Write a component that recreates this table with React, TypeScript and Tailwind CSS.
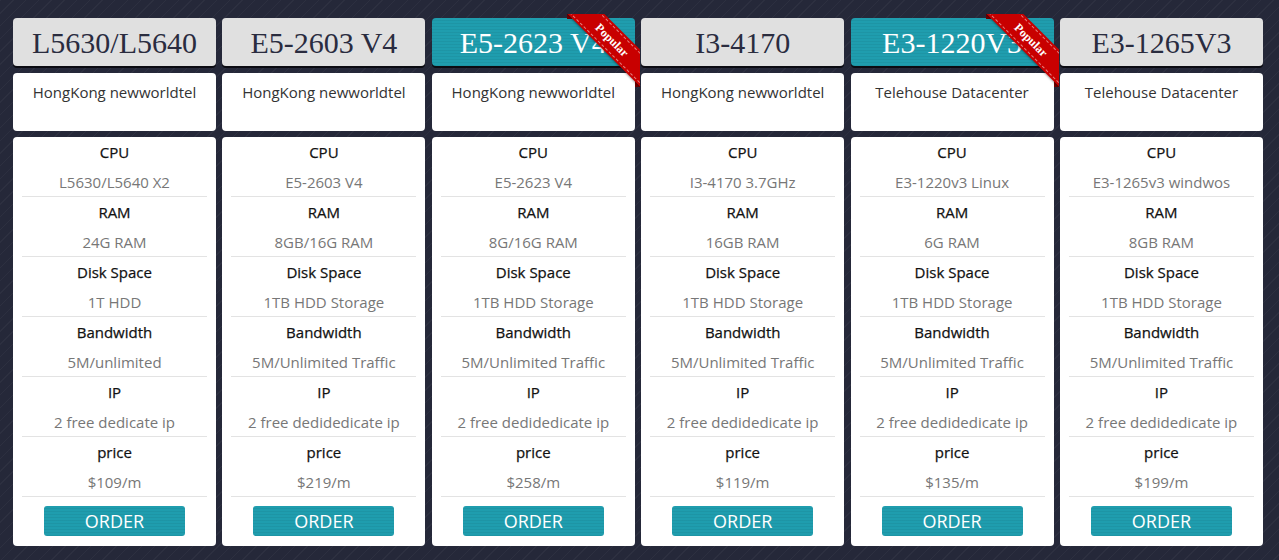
import React from "react";

type Plan = {
  title: string;
  popular?: boolean;
  location: string;
  cpu: string;
  ram: string;
  disk: string;
  bw: string;
  ip: string;
  price: string;
};

const plans: Plan[] = [
  { title: "L5630/L5640", location: "HongKong newworldtel", cpu: "L5630/L5640 X2", ram: "24G RAM", disk: "1T HDD", bw: "5M/unlimited", ip: "2 free dedicate ip", price: "$109/m" },
  { title: "E5-2603 V4", location: "HongKong newworldtel", cpu: "E5-2603 V4", ram: "8GB/16G RAM", disk: "1TB HDD Storage", bw: "5M/Unlimited Traffic", ip: "2 free dedidedicate ip", price: "$219/m" },
  { title: "E5-2623 V4", popular: true, location: "HongKong newworldtel", cpu: "E5-2623 V4", ram: "8G/16G RAM", disk: "1TB HDD Storage", bw: "5M/Unlimited Traffic", ip: "2 free dedidedicate ip", price: "$258/m" },
  { title: "I3-4170", location: "HongKong newworldtel", cpu: "I3-4170 3.7GHz", ram: "16GB RAM", disk: "1TB HDD Storage", bw: "5M/Unlimited Traffic", ip: "2 free dedidedicate ip", price: "$119/m" },
  { title: "E3-1220V3", popular: true, location: "Telehouse Datacenter", cpu: "E3-1220v3 Linux", ram: "6G RAM", disk: "1TB HDD Storage", bw: "5M/Unlimited Traffic", ip: "2 free dedidedicate ip", price: "$135/m" },
  { title: "E3-1265V3", location: "Telehouse Datacenter", cpu: "E3-1265v3 windwos", ram: "8GB RAM", disk: "1TB HDD Storage", bw: "5M/Unlimited Traffic", ip: "2 free dedidedicate ip", price: "$199/m" },
];

function Ribbon() {
  return (
    <div className="absolute top-[-4px] right-[-5px] w-[73px] h-[73px] overflow-hidden pointer-events-none">
      <div className="absolute left-0 top-0 w-[5px] h-[5px] bg-[#6e0000]" />
      <div className="absolute right-0 bottom-0 w-[5px] h-[5px] bg-[#6e0000]" />
      <div className="absolute left-[-25px] top-[13px] w-[140px] h-[26px] rotate-45 bg-[#c80000] shadow-[0_1px_2px_rgba(0,0,0,0.35)] flex items-center justify-center">
        <div className="absolute inset-x-0 top-[2px] bottom-[2px] border-y border-dashed border-white/50" />
        <span className="relative text-white text-[12px] font-bold leading-none [font-family:'Liberation_Serif',serif]">
          Popular
        </span>
      </div>
    </div>
  );
}

function Row({ label, value }: { label: string; value: string }) {
  return (
    <div className="mx-[9px] border-b border-[#e3e3e3]">
      <div className="h-[31px] flex items-center justify-center text-[15px] font-normal text-[#111] [-webkit-text-stroke:0.25px_#111]">{label}</div>
      <div className="h-[28px] flex items-center justify-center text-[15px] text-[#777] pt-[1px]">{value}</div>
    </div>
  );
}

const teal =
  "bg-[#1f9dae] bg-[repeating-linear-gradient(0deg,rgba(0,0,0,0.05)_0px,rgba(0,0,0,0.05)_1px,transparent_1px,transparent_3px)]";

function Card({ p }: { p: Plan }) {
  return (
    <div className="w-[203px] flex flex-col">
      <div
        className={`relative h-[48px] rounded-[4px] shadow-[0_2px_0_#0b0b12] flex items-center justify-center ${
          p.popular ? teal + " text-white" : "bg-[#e0e0e0] text-[#2a2c3f]"
        }`}
      >
        <span className="text-[30px] leading-none pt-[2px] [font-family:'Liberation_Serif',serif]">{p.title}</span>
        {p.popular && <Ribbon />}
      </div>
      <div className="mt-[7px] h-[58px] bg-white rounded-[4px] flex justify-center pt-[9px] text-[15px] leading-[20px] text-[#333]">
        {p.location}
      </div>
      <div className="mt-[6px] bg-white rounded-[4px] pt-[0px] pb-[10px]">
        <Row label="CPU" value={p.cpu} />
        <Row label="RAM" value={p.ram} />
        <Row label="Disk Space" value={p.disk} />
        <Row label="Bandwidth" value={p.bw} />
        <Row label="IP" value={p.ip} />
        <Row label="price" value={p.price} />
        <div className="flex justify-center pt-[9px]">
          <button className={`w-[141px] h-[30px] rounded-[3px] ${teal} text-white text-[18px] leading-none flex items-center justify-center`}>
            ORDER
          </button>
        </div>
      </div>
    </div>
  );
}

export default function App() {
  return (
    <div className="w-full h-[560px] overflow-hidden bg-[#252839] bg-[repeating-linear-gradient(135deg,rgba(255,255,255,0.035)_0px,rgba(255,255,255,0.035)_1px,transparent_1px,transparent_9px)] [font-family:'Open_Sans',sans-serif]">
      <div className="pl-[13px] pt-[18px] flex gap-[6.4px]">
        {plans.map((p) => (
          <Card key={p.title} p={p} />
        ))}
      </div>
    </div>
  );
}
